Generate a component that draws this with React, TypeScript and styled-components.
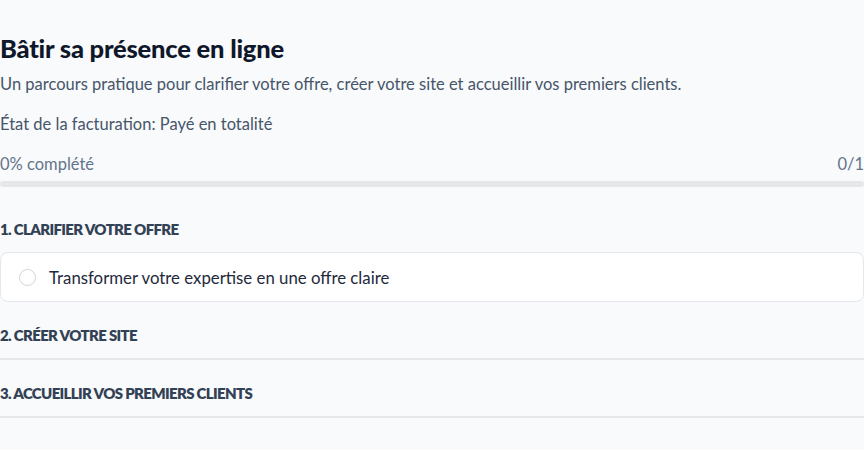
import React from 'react';
import styled, { createGlobalStyle } from 'styled-components';

const GlobalStyle = createGlobalStyle`
  html, body {
    margin: 0;
    padding: 0;
    background: #f8fafc;
  }
  body {
    font-family: Lato, "Noto Sans", sans-serif;
    -webkit-font-smoothing: antialiased;
  }
`;

const Page = styled.main`
  width: 864px;
  padding-top: 32px;
  box-sizing: border-box;
  overflow: hidden;
`;

const Title = styled.h1`
  margin: 0;
  font-size: 25.5px;
  line-height: 32px;
  font-weight: 900;
  color: #0f172a;
  letter-spacing: -0.2px;
`;

const Text = styled.p<{ $gap: number }>`
  margin: ${(p) => p.$gap}px 0 0;
  font-size: 16.5px;
  line-height: 24px;
  color: #475569;
`;

const ProgressHead = styled.div`
  display: flex;
  justify-content: space-between;
  margin-top: 16px;
  font-size: 16.5px;
  line-height: 24px;
  color: #64748b;
`;

const Track = styled.div`
  margin-top: 5px;
  height: 6px;
  border-radius: 3px;
  background: #e5e7eb;
  overflow: hidden;
`;

const Fill = styled.div`
  height: 100%;
  background: #0f172a;
`;

const Section = styled.section<{ $open?: boolean }>`
  padding: ${(p) => (p.$open ? '32px 0 0' : '23px 0 13px')};
  border-bottom: ${(p) => (p.$open ? 'none' : '2px solid #e5e7eb')};
`;

const SectionTitle = styled.h2`
  margin: 0;
  font-size: 15px;
  line-height: 20px;
  font-weight: 800;
  text-transform: uppercase;
  color: #334155;
  letter-spacing: -0.65px;
`;

const Lesson = styled.div`
  margin-top: 13px;
  display: flex;
  align-items: center;
  gap: 13px;
  height: 50px;
  padding: 0 18px;
  box-sizing: border-box;
  background: #ffffff;
  border: 1px solid #e5e7eb;
  border-radius: 8px;
`;

const Radio = styled.span`
  width: 17px;
  height: 17px;
  border-radius: 50%;
  border: 1.5px solid #d1d5db;
  box-sizing: border-box;
  flex-shrink: 0;
`;

const LessonLabel = styled.span`
  font-size: 16.8px;
  color: #1e293b;
`;

const progress = 0;

export default function App() {
  return (
    <>
      <GlobalStyle />
      <Page>
        <Title>Bâtir sa présence en ligne</Title>
        <Text $gap={8}>
          Un parcours pratique pour clarifier votre offre, créer votre site et accueillir vos premiers clients.
        </Text>
        <Text $gap={16}>État de la facturation: Payé en totalité</Text>
        <ProgressHead>
          <span>{progress}% complété</span>
          <span>0/1</span>
        </ProgressHead>
        <Track>
          <Fill style={{ width: `${progress}%` }} />
        </Track>

        <Section $open>
          <SectionTitle>1. Clarifier votre offre</SectionTitle>
          <Lesson>
            <Radio />
            <LessonLabel>Transformer votre expertise en une offre claire</LessonLabel>
          </Lesson>
        </Section>
        <Section>
          <SectionTitle>2. Créer votre site</SectionTitle>
        </Section>
        <Section>
          <SectionTitle>3. Accueillir vos premiers clients</SectionTitle>
        </Section>
      </Page>
    </>
  );
}
